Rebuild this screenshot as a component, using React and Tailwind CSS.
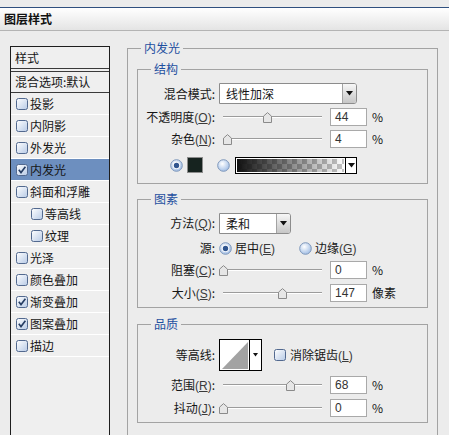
import React from "react";

const cjk = "font-['Noto_Sans_CJK_SC','Noto_Sans',sans-serif]";

const effects = [
  { name: "投影" },
  { name: "内阴影" },
  { name: "外发光" },
  { name: "内发光", checked: true, active: true },
  { name: "斜面和浮雕" },
  { name: "等高线", sub: true },
  { name: "纹理", sub: true },
  { name: "光泽" },
  { name: "颜色叠加" },
  { name: "渐变叠加", checked: true },
  { name: "图案叠加", checked: true },
  { name: "描边" },
];

function Check({ checked }) {
  return (
    <svg width="12" height="12" viewBox="0 0 12 12" className="shrink-0">
      <defs>
        <linearGradient id="chk" x1="0" y1="0" x2="1" y2="1">
          <stop offset="0" stopColor="#ffffff" />
          <stop offset="1" stopColor="#b7cae6" />
        </linearGradient>
      </defs>
      <rect x="0.5" y="0.5" width="11" height="11" rx="2" fill="url(#chk)" stroke="#52698f" />
      {checked && <path d="M2.8 5.8 L5 8.6 L9.4 2.8" fill="none" stroke="#263d63" strokeWidth="1.6" />}
    </svg>
  );
}

function Radio({ checked }) {
  return (
    <svg width="13" height="13" viewBox="0 0 13 13" className="shrink-0">
      <defs>
        <radialGradient id="rad" cx="40%" cy="35%" r="70%">
          <stop offset="0" stopColor="#ffffff" />
          <stop offset="1" stopColor="#9dbbe4" />
        </radialGradient>
      </defs>
      <circle cx="6.5" cy="6.5" r="5.8" fill="url(#rad)" stroke="#7e97bb" />
      {checked && <circle cx="6.5" cy="6.5" r="3.6" fill="#ffffff" />}
      {checked && <circle cx="6.5" cy="6.5" r="2.7" fill="#30558f" />}
    </svg>
  );
}

function Arrow() {
  return (
    <svg width="7" height="5" viewBox="0 0 7 5">
      <path d="M0 0 H7 L3.5 4.5 Z" fill="#111" />
    </svg>
  );
}

function Key({ k }) {
  return (
    <span className="font-['Liberation_Sans',sans-serif] text-[#3a3a3a]">
      (<span className="underline">{k}</span>)
    </span>
  );
}

function Select({ w, text }) {
  return (
    <div className={`flex h-[21px] ${w} border border-[#8c8c8c] bg-white rounded-r-[3px]`}>
      <div className="flex-1 pl-[6px] leading-[19px]">{text}</div>
      <div className="w-[14px] border-l border-[#a3a3a3] rounded-r-[2px] bg-gradient-to-b from-[#f7f7f7] to-[#c6c6c6] flex items-center justify-center">
        <Arrow />
      </div>
    </div>
  );
}

function Slider({ pct }) {
  return (
    <div className="relative w-[107px] h-[11px] flex items-center">
      <div className="mx-[4px] flex-1 h-[2px] border-t border-[#9c9c9c] bg-white" />
      <svg
        width="9"
        height="11"
        viewBox="0 0 9 11"
        className="absolute top-0"
        style={{ left: Math.round(pct * 99) }}
      >
        <path d="M0.5 10.5 V4.2 L4.5 0.6 L8.5 4.2 V10.5 Z" fill="#e6e6e6" stroke="#8a8a8a" />
      </svg>
    </div>
  );
}

function Num({ v }) {
  return (
    <div className="w-[37px] h-[18px] border border-[#a9a9a9] bg-white pl-[4px] leading-[16px] font-['Liberation_Sans',sans-serif] text-[#333]">
      {v}
    </div>
  );
}

function Row({ label, className, children }) {
  return (
    <div className={`flex items-center ${className}`}>
      <div className="w-[77px] text-right whitespace-nowrap">{label}</div>
      <div className="ml-[4px] flex items-center">{children}</div>
    </div>
  );
}

function SliderRow({ label, pct, value, unit, className }) {
  return (
    <Row label={label} className={className}>
      <Slider pct={pct} />
      <div className="ml-[4px]">
        <Num v={value} />
      </div>
      <span className="ml-[5px]">{unit}</span>
    </Row>
  );
}

function Group({ title, className, children }) {
  return (
    <fieldset className={`border border-[#a3a3a3] ${className}`}>
      <legend className="ml-[13px] px-[3px] leading-[16px] text-[#1e4f9f]">{title}</legend>
      {children}
    </fieldset>
  );
}

export default function App() {
  return (
    <div className={`w-[449px] h-[435px] overflow-hidden bg-[#ececec] text-[12px] leading-[16px] text-[#161616] ${cjk}`}>
      {/* Title bar */}
      <div className="h-[7px]" />
      <div className="h-[24px] border-t border-[#30507f] border-b border-b-[#b4b4b4] bg-gradient-to-b from-white to-[#e4e4e4] pl-[4px] flex items-center font-bold text-[#111]">
        图层样式
      </div>

      <div className="flex items-start pl-[10px]">
        {/* Style list */}
        <div className="mt-[15px] w-[100px] h-[400px] border border-[#1e1e1e] bg-[#efefef] shrink-0">
          <div className="h-[21px] pl-[4px] flex items-center">样式</div>
          <div className="border-b-4 border-double border-[#3a3a3a]" />
          <div className="h-[21px] pl-[4px] flex items-center border-b border-[#3a3a3a]">混合选项:默认</div>
          {effects.map((e) => (
            <div
              key={e.name}
              className={`h-[22px] flex items-center border-b border-white ${e.sub ? "pl-[20px]" : "pl-[5px]"} ${e.active ? "bg-[#6d8fbf]" : ""}`}
            >
              <Check checked={e.checked} />
              <span className="ml-[2px]">{e.name}</span>
            </div>
          ))}
        </div>

        {/* Settings */}
        <Group title="内发光" className="mt-[9px] ml-[17px] w-[311px] pb-[30px]">
          <Group title="结构" className="mt-[5px] mx-[9px] pt-[6px] pb-[8px]">
            <Row label="混合模式:" className="h-[21px]">
              <Select w="w-[138px]" text="线性加深" />
            </Row>
            <SliderRow
              label={<>不透明度<Key k="O" />:</>}
              pct={0.44}
              value="44"
              unit="%"
              className="mt-[2px] h-[22px]"
            />
            <SliderRow
              label={<>杂色<Key k="N" />:</>}
              pct={0.04}
              value="4"
              unit="%"
              className="h-[22px]"
            />
            <div className="mt-[5px] h-[20px] pl-[32px] flex items-center">
              <Radio checked />
              <div className="ml-[4px] w-[16px] h-[16px] border border-[#8c8c8c] bg-[#16231f]" />
              <div className="ml-[14px]">
                <Radio />
              </div>
              <div className="ml-[5px] w-[122px] h-[17px] border border-black flex">
                <div className="flex-1 border border-white bg-[repeating-conic-gradient(#c4c4c4_0%_25%,#ffffff_0%_50%)] bg-[length:10px_10px]">
                  <div className="w-full h-full bg-gradient-to-r from-[#111111] to-transparent" />
                </div>
                <div className="w-[11px] border-l border-black bg-white flex items-center justify-center">
                  <Arrow />
                </div>
              </div>
            </div>
          </Group>

          <Group title="图素" className="mt-[7px] mx-[9px] pt-[6px] pb-[3px]">
            <Row label={<>方法<Key k="Q" />:</>} className="h-[20px]">
              <Select w="w-[72px]" text="柔和" />
            </Row>
            <Row label="源:" className="mt-[4px] h-[22px]">
              <Radio checked />
              <span className="ml-[3px]">
                居中<Key k="E" />
              </span>
              <div className="ml-[24px]">
                <Radio />
              </div>
              <span className="ml-[3px]">
                边缘<Key k="G" />
              </span>
            </Row>
            <SliderRow
              label={<>阻塞<Key k="C" />:</>}
              pct={0}
              value="0"
              unit="%"
              className="h-[22px]"
            />
            <SliderRow
              label={<>大小<Key k="S" />:</>}
              pct={0.6}
              value="147"
              unit="像素"
              className="mt-[1px] h-[22px]"
            />
          </Group>

          <Group title="品质" className="mt-[8px] mx-[9px] pt-[7px] pb-[3px]">
            <Row label="等高线:" className="h-[32px]">
              <div className="w-[43px] h-[32px] border border-black flex">
                <svg width="29" height="30" viewBox="0 0 29 30" className="bg-white">
                  <path d="M2 29 L28 2 L28 29 Z" fill="#a3a3a3" />
                </svg>
                <div className="flex-1 border-l border-black bg-white flex items-center justify-center">
                  <svg width="5" height="4" viewBox="0 0 5 4">
                    <path d="M0 0 H5 L2.5 3.5 Z" fill="#111" />
                  </svg>
                </div>
              </div>
              <div className="ml-[12px]">
                <Check />
              </div>
              <span className="ml-[4px]">
                消除锯齿<Key k="L" />
              </span>
            </Row>
            <SliderRow
              label={<>范围<Key k="R" />:</>}
              pct={0.68}
              value="68"
              unit="%"
              className="mt-[3px] h-[22px]"
            />
            <SliderRow
              label={<>抖动<Key k="J" />:</>}
              pct={0}
              value="0"
              unit="%"
              className="mt-[1px] h-[22px]"
            />
          </Group>
        </Group>
      </div>
    </div>
  );
}
